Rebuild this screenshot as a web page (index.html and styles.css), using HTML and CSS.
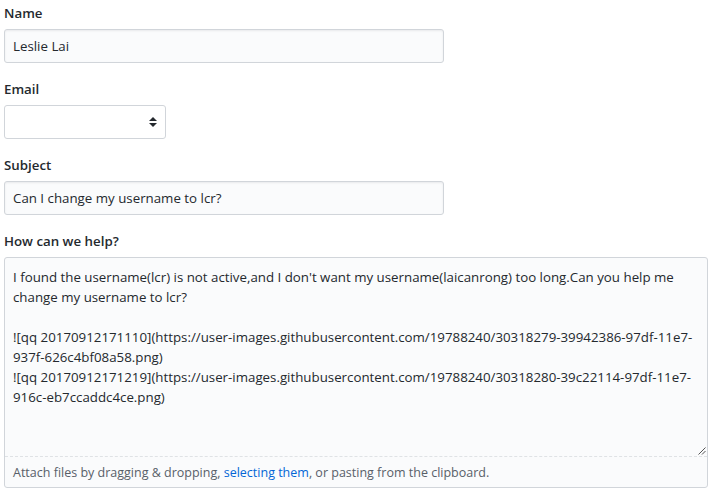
FILE: index.html
```html
<!DOCTYPE html>
<html>
<head>
<meta charset="utf-8">
<link rel="stylesheet" href="styles.css">
</head>
<body>
<form class="form">
  <div class="group">
    <label class="label">Name</label>
    <div class="input input-name">Leslie Lai</div>
  </div>
  <div class="group">
    <label class="label">Email</label>
    <div class="select">
      <svg class="caret" width="8" height="10" viewBox="0 0 8 10"><path d="M4 0 L8 4 H0 Z M0 6 H8 L4 10 Z" fill="#24292e"/></svg>
    </div>
  </div>
  <div class="group">
    <label class="label">Subject</label>
    <div class="input input-name">Can I change my username to lcr?</div>
  </div>
  <div class="group">
    <label class="label">How can we help?</label>
    <div class="write">
      <div class="textarea">I found the username(lcr) is not active,and I don't want my username(laicanrong) too long.Can you help me change my username to lcr?<br><br>![qq 20170912171110](https://user-images.githubusercontent.com/19788240/30318279-39942386-97df-11e7-937f-626c4bf08a58.png)<br>![qq 20170912171219](https://user-images.githubusercontent.com/19788240/30318280-39c22114-97df-11e7-916c-eb7ccaddc4ce.png)
        <svg class="resize" width="8" height="8" viewBox="0 0 8 8"><path d="M7.5 0.5 L0.5 7.5 M7.5 4 L4 7.5" stroke="#555" stroke-width="1"/></svg>
      </div>
      <div class="drag">Attach files by dragging &amp; dropping, <span class="link">selecting them</span>, or pasting from the clipboard.</div>
    </div>
  </div>
</form>
</body>
</html>
```
FILE: styles.css
```css
html, body {
  margin: 0;
  padding: 0;
  background: #fff;
}
body {
  font-family: "Open Sans", "Noto Sans", sans-serif;
  font-size: 13.3px;
  color: #24292e;
}
.form {
  padding: 3px 1px 0 4px;
  display: flex;
  flex-direction: column;
  gap: 16px;
}
.group {
  display: flex;
  flex-direction: column;
  gap: 5px;
}
.label {
  font-weight: 600;
  line-height: 21px;
}
.input {
  box-sizing: border-box;
  width: 440px;
  height: 34px;
  padding: 6px 8px;
  line-height: 21px;
  background: #fafbfc;
  border: 1px solid #d1d5da;
  border-radius: 3px;
  box-shadow: inset 0 1px 2px rgba(27,31,35,0.075);
}
.select {
  box-sizing: border-box;
  width: 162px;
  height: 34px;
  border: 1px solid #d1d5da;
  border-radius: 3px;
  background: #fff;
  display: flex;
  align-items: center;
  justify-content: flex-end;
  padding-right: 8px;
}
.write {
  box-sizing: border-box;
  width: 704px;
  border: 1px solid #d1d5da;
  border-radius: 3px;
  background: #fafbfc;
}
.textarea {
  position: relative;
  box-sizing: border-box;
  height: 199px;
  padding: 9px 7px 8px 8px;
  line-height: 20px;
  border-bottom: 1px dashed #dfe2e5;
}
.resize {
  position: absolute;
  right: 1px;
  bottom: 1px;
}
.drag {
  height: 30px;
  line-height: 32px;
  padding: 0 8px;
  font-size: 12.5px;
  color: #586069;
}
.link {
  color: #0366d6;
}
```
